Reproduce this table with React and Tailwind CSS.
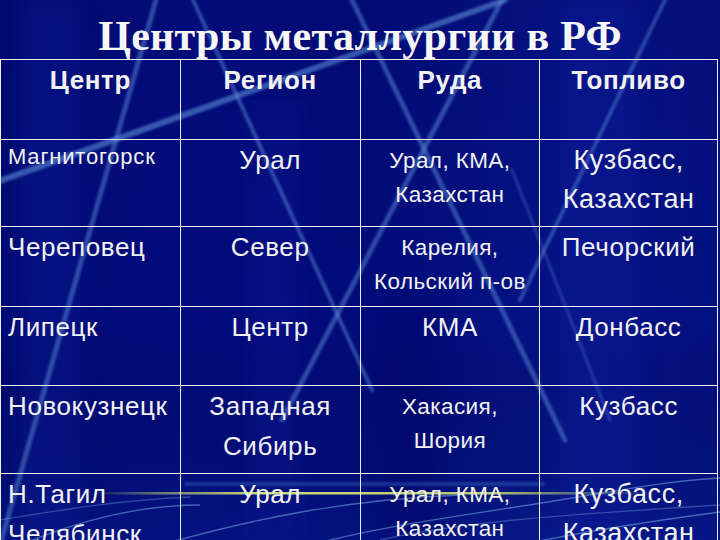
import React from "react";

const BIG = "text-[26px] leading-[39px] pt-[1px] tracking-[0.6px]";
const SMALL = "text-[22.5px] leading-[34px] pt-[4px] tracking-[0.4px]";
const MAGN = "text-[22px] leading-[32px] pt-[1px] tracking-[0.8px]";
const LG = "text-[27px] leading-[39px] pt-[1px] tracking-[0.6px]";
const TALL = "text-[26px] leading-[40px] pt-[0px] tracking-[0.6px]";

const rows = [
  {
    h: "h-[87px]",
    cells: [
      { t: ["Магнитогорск"], c: MAGN },
      { t: ["Урал"], c: BIG },
      { t: ["Урал, КМА,", "Казахстан"], c: SMALL },
      { t: ["Кузбасс,", "Казахстан"], c: LG },
    ],
  },
  {
    h: "h-[80px]",
    cells: [
      { t: ["Череповец"], c: BIG },
      { t: ["Север"], c: BIG },
      { t: ["Карелия,", "Кольский п-ов"], c: SMALL },
      { t: ["Печорский"], c: BIG },
    ],
  },
  {
    h: "h-[79px]",
    cells: [
      { t: ["Липецк"], c: BIG },
      { t: ["Центр"], c: BIG },
      { t: ["КМА"], c: BIG },
      { t: ["Донбасс"], c: BIG },
    ],
  },
  {
    h: "h-[88px]",
    cells: [
      { t: ["Новокузнецк"], c: BIG },
      { t: ["Западная", "Сибирь"], c: TALL },
      { t: ["Хакасия,", "Шория"], c: SMALL },
      { t: ["Кузбасс"], c: BIG },
    ],
  },
  {
    h: "h-[100px]",
    cells: [
      { t: ["Н.Тагил", "Челябинск"], c: TALL },
      { t: ["Урал"], c: BIG },
      { t: ["Урал, КМА,", "Казахстан"], c: SMALL },
      { t: ["Кузбасс,", "Казахстан"], c: LG },
    ],
  },
];

const widths = ["w-[180px]", "w-[180px]", "w-[180px]", "w-[178px]"];
const headers = ["Центр", "Регион", "Руда", "Топливо"];

function Background() {
  const streak = (x1, y1, x2, y2, w, o) => (
    <line
      x1={x1}
      y1={y1}
      x2={x2}
      y2={y2}
      stroke="#5a8ad4"
      strokeOpacity={o}
      strokeWidth={w}
      strokeLinecap="round"
    />
  );
  return (
    <svg
      className="absolute inset-0 pointer-events-none"
      width="720"
      height="540"
      viewBox="0 0 720 540"
    >
      <defs>
        <linearGradient id="bgx" x1="0" y1="0" x2="1" y2="0">
          <stop offset="0" stopColor="#020a74" />
          <stop offset="0.25" stopColor="#030c7e" />
          <stop offset="0.5" stopColor="#020b7a" />
          <stop offset="0.8" stopColor="#061386" />
          <stop offset="1" stopColor="#040f80" />
        </linearGradient>
        <linearGradient id="bgy" x1="0" y1="0" x2="0" y2="1">
          <stop offset="0" stopColor="#000000" stopOpacity="0.05" />
          <stop offset="0.6" stopColor="#000000" stopOpacity="0" />
          <stop offset="1" stopColor="#0a2a90" stopOpacity="0.25" />
        </linearGradient>
        <linearGradient id="green" x1="0" y1="0" x2="1" y2="0">
          <stop offset="0" stopColor="#c8e070" stopOpacity="0" />
          <stop offset="0.12" stopColor="#c8e070" stopOpacity="0.5" />
          <stop offset="0.3" stopColor="#d2ea7a" stopOpacity="0.95" />
          <stop offset="0.7" stopColor="#c8e070" stopOpacity="0.9" />
          <stop offset="1" stopColor="#a8c870" stopOpacity="0" />
        </linearGradient>
        <filter id="soft" x="-10%" y="-10%" width="120%" height="120%">
          <feGaussianBlur stdDeviation="1.3" />
        </filter>
        <filter id="wide" x="-20%" y="-20%" width="140%" height="140%">
          <feGaussianBlur stdDeviation="10" />
        </filter>
      </defs>
      <rect width="720" height="540" fill="url(#bgx)" />
      <rect width="720" height="540" fill="url(#bgy)" />
      <g filter="url(#wide)" opacity="0.35">
        <rect x="20" y="0" width="60" height="540" fill="#0c1c9a" />
        <rect x="250" y="100" width="50" height="440" fill="#0a1890" />
        <rect x="560" y="0" width="80" height="540" fill="#0d1d9c" />
        <rect x="380" y="300" width="60" height="240" fill="#000060" />
      </g>
      <g filter="url(#soft)">
        {streak(-20, 188, 505, 0, 6, 0.6)}
        {streak(156, 0, 0, 545, 5, 0.5)}
        {streak(193, 0, 372, 390, 4, 0.5)}
        {streak(352, 0, 565, 440, 5, 0.5)}
        {streak(502, 0, 282, 420, 5, 0.5)}
        {streak(665, 0, 520, 300, 4, 0.45)}
        {streak(512, 170, 610, 420, 3, 0.3)}
      </g>
      <g fill="none" stroke="#7aaae6" strokeWidth="1.3" strokeOpacity="0.55">
        <path d="M20 545 C 80 520, 140 505, 200 505" />
        <path d="M160 545 C 250 520, 340 500, 460 495" />
        <path d="M300 548 C 380 525, 470 515, 560 500 S 680 480, 720 478" />
        <path d="M520 545 C 590 530, 660 520, 720 512" />
        <path d="M0 520 C 60 510, 120 500, 190 497" strokeOpacity="0.35" />
        <path d="M380 540 C 460 522, 560 515, 720 505" strokeOpacity="0.35" />
      </g>
      <rect x="185" y="482" width="360" height="4" fill="#4a7ad0" opacity="0.35" filter="url(#soft)" />
      <rect x="90" y="492" width="570" height="2.5" fill="url(#green)" />
    </svg>
  );
}

export default function App() {
  return (
    <div className="relative w-[720px] h-[540px] overflow-hidden bg-[#030c7a] text-[#f2f2f2]">
      <Background />
      <div className="relative flex flex-col">
        <div
          className="h-[59px] pt-[15px] text-center font-bold text-[42px] leading-[42px] tracking-[0.3px] text-[#f6f6f6] whitespace-nowrap"
          style={{ fontFamily: '"Liberation Serif", "Times New Roman", serif' }}
        >
          Центры металлургии в РФ
        </div>
        <div
          className="flex flex-col border-t-[1.5px] border-l-[1.5px] border-[#eeeeee] w-[718px]"
          style={{ fontFamily: '"Liberation Sans", Arial, sans-serif' }}
        >
          <div className="flex h-[80px] border-b-[1.5px] border-[#eeeeee]">
            {headers.map((h, i) => (
              <div
                key={h}
                className={`${widths[i]} border-r-[1.5px] border-[#eeeeee] text-center font-bold text-[26px] leading-[39px] pt-[1px] tracking-[0.6px]`}
              >
                {h}
              </div>
            ))}
          </div>
          {rows.map((r, ri) => (
            <div key={ri} className={`flex ${r.h} border-b-[1.5px] border-[#eeeeee]`}>
              {r.cells.map((cell, ci) => (
                <div
                  key={ci}
                  className={`${widths[ci]} border-r-[1.5px] border-[#eeeeee] ${
                    ci === 0 ? "text-left pl-[7px]" : "text-center"
                  } ${cell.c} whitespace-nowrap`}
                >
                  {cell.t.map((line, li) => (
                    <div key={li}>{line}</div>
                  ))}
                </div>
              ))}
            </div>
          ))}
        </div>
      </div>
    </div>
  );
}
